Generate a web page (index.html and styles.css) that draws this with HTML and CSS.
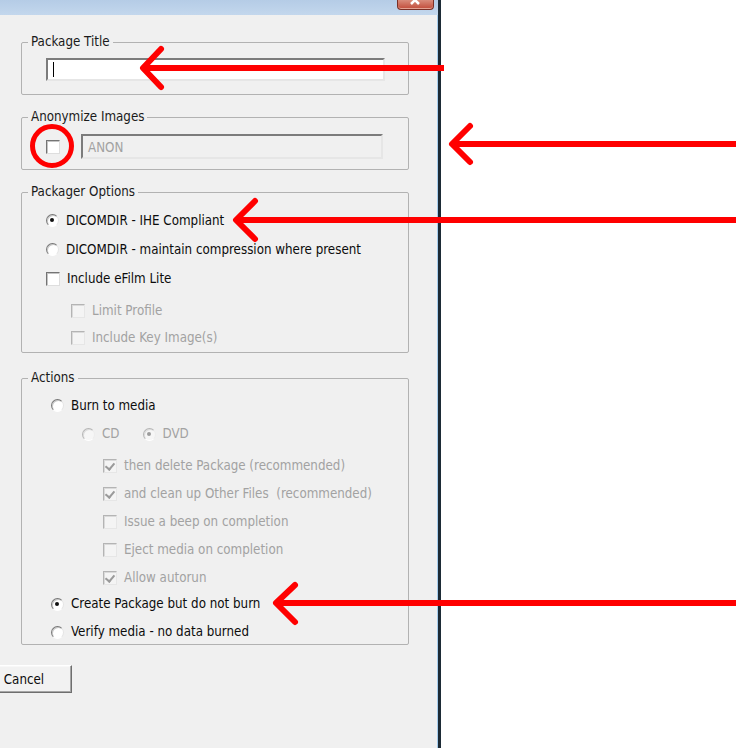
FILE: index.html
```html
<!DOCTYPE html>
<html lang="en">
<head>
    <meta charset="UTF-8">
    <title>Create Package</title>
    <link rel="stylesheet" href="styles.css">
</head>
<body>
    <div class="window">
        <div class="titlebar">
            <span class="close">
                <svg width="12" height="5" viewBox="0 0 12 5"><path d="M1 -4 L9 4 M9 -4 L1 4" stroke="#fff" stroke-width="2.5" fill="none"/></svg>
            </span>
        </div>

        <fieldset class="group group-title">
            <legend>Package Title</legend>
            <div class="group-body">
                <div class="textbox textbox-title"><span class="caret"></span></div>
            </div>
        </fieldset>

        <fieldset class="group group-anon">
            <legend>Anonymize Images</legend>
            <div class="group-body">
                <span class="check"></span>
                <div class="textbox textbox-anon disabled">ANON</div>
            </div>
        </fieldset>

        <fieldset class="group group-options">
            <legend>Packager Options</legend>
            <div class="group-body">
                <div class="row"><span class="radio on"></span>DICOMDIR - IHE Compliant</div>
                <div class="row"><span class="radio"></span>DICOMDIR - maintain compression where present</div>
                <div class="row"><span class="check"></span>Include eFilm Lite</div>
                <div class="sub">
                    <div class="row row-sm disabled"><span class="check"></span>Limit Profile</div>
                    <div class="row row-sm disabled"><span class="check"></span>Include Key Image(s)</div>
                </div>
            </div>
        </fieldset>

        <fieldset class="group group-actions">
            <legend>Actions</legend>
            <div class="group-body">
                <div class="row"><span class="radio"></span>Burn to media</div>
                <div class="row row-media disabled">
                    <span class="opt"><span class="radio"></span>CD</span>
                    <span class="opt"><span class="radio on"></span>DVD</span>
                </div>
                <div class="burn-opts">
                    <div class="row disabled"><span class="check on"></span>then delete Package (recommended)</div>
                    <div class="row disabled"><span class="check on"></span>and clean up Other Files&nbsp; (recommended)</div>
                    <div class="row disabled"><span class="check"></span>Issue a beep on completion</div>
                    <div class="row disabled"><span class="check"></span>Eject media on completion</div>
                    <div class="row disabled"><span class="check on"></span>Allow autorun</div>
                </div>
                <div class="row row-create"><span class="radio on"></span>Create Package but do not burn</div>
                <div class="row row-verify"><span class="radio"></span>Verify media - no data burned</div>
            </div>
        </fieldset>

        <div class="buttons">
            <button class="btn">Cancel</button>
        </div>
    </div>

    <!-- annotation marks drawn over the screenshot -->
    <svg class="marks" width="736" height="748" viewBox="0 0 736 748">
        <g stroke="#ff0000" stroke-width="6" fill="none" stroke-linecap="round" stroke-linejoin="round">
            <line x1="144" y1="68" x2="444" y2="68" stroke-linecap="butt"/>
            <polyline points="161,49 143,68 161,87"/>

            <line x1="453" y1="144" x2="736" y2="144" stroke-linecap="butt"/>
            <polyline points="470,126 452,144 470,162"/>

            <line x1="237" y1="220" x2="736" y2="220" stroke-linecap="butt"/>
            <polyline points="255,201 236,220 255,239"/>

            <line x1="277" y1="603" x2="736" y2="603" stroke-linecap="butt"/>
            <polyline points="295,585 276,603 295,622"/>

            <circle cx="52" cy="146" r="19.5" stroke-width="5"/>
        </g>
    </svg>
</body>
</html>
```

FILE: styles.css
```css
* {
    box-sizing: border-box;
    margin: 0;
    padding: 0;
}
body {
    font-family: "DejaVu Sans Condensed", "DejaVu Sans", sans-serif;
    font-size: 13.25px;
    color: #0c0c0c;
    background: #ffffff;
    height: 748px;
    overflow: hidden;
    display: flex;
    position: relative;
}
.window {
    width: 441px;
    height: 748px;
    background: #f0f0f0;
    border-right: 3px solid #1d2b36;
    box-shadow: inset -1px 0 #a6cdee;
}
.titlebar {
    height: 15px;
    background: linear-gradient(#b5cce6, #c3d7ed);
    display: flex;
    justify-content: flex-end;
    padding-right: 4px;
}
.close {
    width: 37px;
    height: 10px;
    background: linear-gradient(#d98c7b, #c14b39);
    border: 1px solid #7b3026;
    border-top: none;
    border-radius: 0 0 4px 4px;
    box-shadow: inset 0 -1px #e4a292;
    display: flex;
    justify-content: center;
}
.close svg {
    display: block;
}

/* group boxes */
.group {
    margin: 14px 0 0 21px;
    width: 388px;
    border: 1px solid #b2b2b2;
    border-radius: 2px;
    min-inline-size: 0;
}
.group legend {
    margin-left: 6px;
    padding: 0 3px;
    line-height: 16px;
    color: #1a1a1a;
}
.group-title {
    margin-top: 19px;
}
.group-title .group-body {
    padding: 8px 0 13px 24px;
}
.group-anon .group-body {
    padding: 9px 0 10px 24px;
    display: flex;
    align-items: center;
    gap: 21px;
}
.group-options {
    margin-top: 14px;
}
.group-options .group-body {
    padding: 6px 0 1px 24px;
}
.group-actions {
    margin-top: 17px;
}
.group-actions .group-body {
    padding: 5px 0 0 29px;
}

/* text boxes */
.textbox {
    height: 23px;
    background: #ffffff;
    border: 2px solid;
    border-color: #7c7c7c #e6e6e6 #e6e6e6 #7c7c7c;
    padding: 2px 0 0 5px;
    display: flex;
    align-items: center;
    line-height: 16px;
}
.textbox-title {
    width: 339px;
    padding-top: 0;
}
.textbox-anon {
    width: 302px;
    height: 25px;
    background: #f0f0f0;
}
.caret {
    width: 1px;
    height: 15px;
    background: #000000;
}

/* checkbox / radio rows */
.row {
    height: 29px;
    display: flex;
    align-items: center;
    gap: 7px;
    line-height: 16px;
    white-space: nowrap;
}
.row-sm {
    height: 27px;
    gap: 7px;
}
.sub {
    margin-top: 4px;
    padding-left: 25px;
}
.row-media {
    height: 28px;
    margin-top: 0;
    padding-left: 31px;
    gap: 23px;
}
.opt {
    display: flex;
    align-items: center;
    gap: 7px;
}
.burn-opts {
    margin-top: 4px;
    padding-left: 52px;
}
.burn-opts .row {
    height: 28px;
    gap: 7px;
}
.row-create {
    height: 24px;
}
.row-verify {
    height: 24px;
    margin-top: 4px;
}
.disabled {
    color: #a2a2a2;
}

.check {
    flex: none;
    width: 14px;
    height: 14px;
    background: #ffffff;
    border: 1px solid;
    border-color: #747474 #dedede #dedede #747474;
    box-shadow: inset 1px 1px #c4c4c4;
    position: relative;
}
.disabled .check {
    background: #f4f4f4;
    border-color: #b4b4b4 #e6e6e6 #e6e6e6 #b4b4b4;
    box-shadow: inset 1px 1px #dadada;
}
.check.on::after {
    content: "";
    position: absolute;
    left: 3px;
    top: 1px;
    width: 4px;
    height: 7px;
    border: solid #9a9a9a;
    border-width: 0 2px 2px 0;
    transform: rotate(40deg);
}
.radio {
    flex: none;
    width: 13px;
    height: 13px;
    border-radius: 50%;
    background: #ffffff;
    border: 1px solid;
    border-color: #777777 #e4e4e4 #ffffff #777777;
    box-shadow: inset 1px 1px #c9c9c9;
    position: relative;
}
.disabled .radio {
    border-color: #b5b5b5 #ececec #ffffff #b5b5b5;
    box-shadow: inset 1px 1px #dddddd;
    background: #f6f6f6;
}
.radio.on::after {
    content: "";
    position: absolute;
    left: 3px;
    top: 3px;
    width: 4px;
    height: 4px;
    border-radius: 50%;
    background: #111111;
}
.disabled .radio.on::after {
    background: #9c9c9c;
}

/* buttons */
.buttons {
    margin-top: 20px;
    margin-left: -24px;
}
.btn {
    width: 96px;
    height: 28px;
    font-family: inherit;
    font-size: 13.25px;
    color: #0c0c0c;
    background: #f2f2f2;
    border: 1px solid;
    border-color: #ffffff #6e6e6e #6e6e6e #ffffff;
    box-shadow: inset -1px -1px #a6a6a6, inset 1px 1px #f8f8f8;
}

.marks {
    position: absolute;
    left: 0;
    top: 0;
    pointer-events: none;
}
```
